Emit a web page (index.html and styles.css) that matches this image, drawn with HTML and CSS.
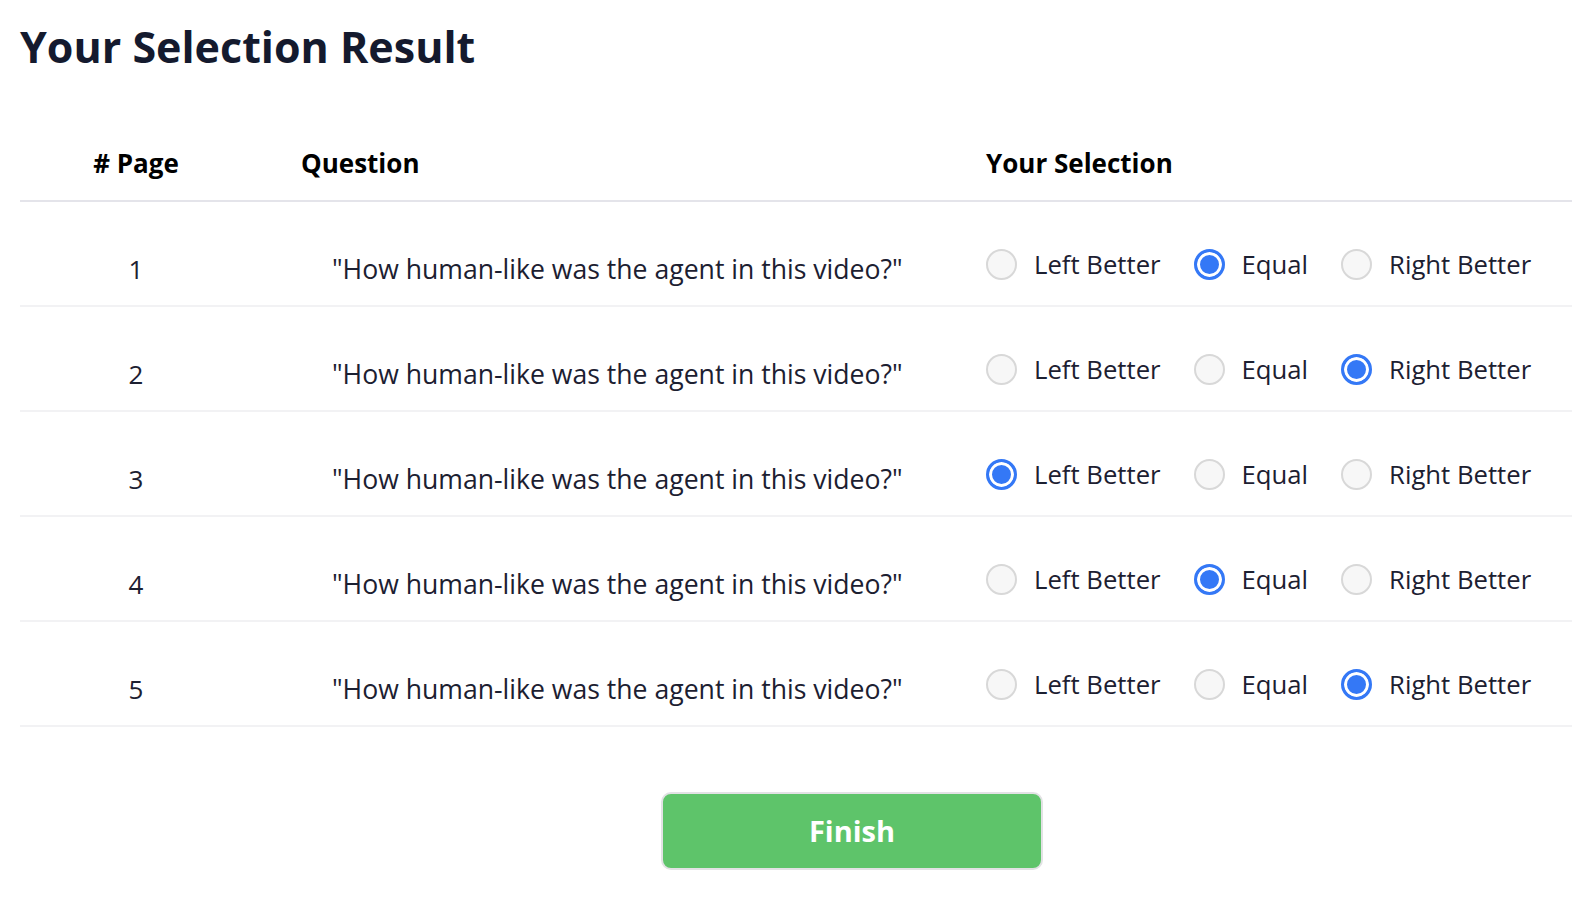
FILE: index.html
```html
<!DOCTYPE html>
<html lang="en">
<head>
<meta charset="utf-8">
<title>Your Selection Result</title>
<link rel="stylesheet" href="styles.css">
</head>
<body>
<div class="page">
  <h1 class="title">Your Selection Result</h1>
  <table class="results">
    <colgroup>
      <col class="col-page">
      <col class="col-question">
      <col class="col-selection">
    </colgroup>
    <thead>
      <tr>
        <th class="th-page"># Page</th>
        <th class="th-question">Question</th>
        <th class="th-selection">Your Selection</th>
      </tr>
    </thead>
    <tbody>
      <tr>
        <td class="td-page">1</td>
        <td class="td-question">"How human-like was the agent in this video?"</td>
        <td class="td-selection">
          <div class="options">
            <label class="option"><span class="radio"></span><span class="opt-text">Left Better</span></label>
            <label class="option"><span class="radio checked"></span><span class="opt-text">Equal</span></label>
            <label class="option"><span class="radio"></span><span class="opt-text">Right Better</span></label>
          </div>
        </td>
      </tr>
      <tr>
        <td class="td-page">2</td>
        <td class="td-question">"How human-like was the agent in this video?"</td>
        <td class="td-selection">
          <div class="options">
            <label class="option"><span class="radio"></span><span class="opt-text">Left Better</span></label>
            <label class="option"><span class="radio"></span><span class="opt-text">Equal</span></label>
            <label class="option"><span class="radio checked"></span><span class="opt-text">Right Better</span></label>
          </div>
        </td>
      </tr>
      <tr>
        <td class="td-page">3</td>
        <td class="td-question">"How human-like was the agent in this video?"</td>
        <td class="td-selection">
          <div class="options">
            <label class="option"><span class="radio checked"></span><span class="opt-text">Left Better</span></label>
            <label class="option"><span class="radio"></span><span class="opt-text">Equal</span></label>
            <label class="option"><span class="radio"></span><span class="opt-text">Right Better</span></label>
          </div>
        </td>
      </tr>
      <tr>
        <td class="td-page">4</td>
        <td class="td-question">"How human-like was the agent in this video?"</td>
        <td class="td-selection">
          <div class="options">
            <label class="option"><span class="radio"></span><span class="opt-text">Left Better</span></label>
            <label class="option"><span class="radio checked"></span><span class="opt-text">Equal</span></label>
            <label class="option"><span class="radio"></span><span class="opt-text">Right Better</span></label>
          </div>
        </td>
      </tr>
      <tr>
        <td class="td-page">5</td>
        <td class="td-question">"How human-like was the agent in this video?"</td>
        <td class="td-selection">
          <div class="options">
            <label class="option"><span class="radio"></span><span class="opt-text">Left Better</span></label>
            <label class="option"><span class="radio"></span><span class="opt-text">Equal</span></label>
            <label class="option"><span class="radio checked"></span><span class="opt-text">Right Better</span></label>
          </div>
        </td>
      </tr>
    </tbody>
  </table>
  <div class="actions">
    <button class="finish" type="button">Finish</button>
  </div>
</div>
</body>
</html>
```
FILE: styles.css
```css
html, body {
  margin: 0;
  padding: 0;
  background: #ffffff;
}

body {
  font-family: "Open Sans", "Noto Sans", sans-serif;
  color: #1c2031;
}

.page {
  padding-left: 20px;
}

.title {
  margin: 0;
  padding-top: 18px;
  font-size: 43px;
  font-weight: 700;
  line-height: 1.362;
  color: #141a2e;
}

.results {
  width: 100%;
  margin-top: 36px;
  border-collapse: collapse;
  table-layout: fixed;
}

.col-page { width: 232px; }
.col-question { width: 734px; }
.col-selection { width: auto; }

.results th {
  padding: 32px 0 19px;
  font-size: 26px;
  font-weight: 700;
  line-height: 36px;
  color: #000000;
  text-align: left;
  border-bottom: 2px solid #e4e4ea;
}

.results .th-page { text-align: center; }
.results .th-question { padding-left: 49px; }

.results td {
  padding: 49px 0 18px;
  font-size: 26px;
  line-height: 36px;
  color: #1c2031;
  border-bottom: 2px solid #f2f2f4;
  vertical-align: top;
  white-space: nowrap;
}

.results .td-page { text-align: center; }
.results .td-question { padding-left: 80px; font-size: 26.6px; }
.results .td-selection { padding-top: 45px; padding-bottom: 22px; }

.options {
  display: flex;
  align-items: center;
  gap: 33px;
}

.option {
  display: flex;
  align-items: center;
  gap: 17px;
  font-size: 25.7px;
  line-height: 36px;
  color: #1c2031;
}

.opt-text {
  position: relative;
  top: 0;
}

.radio {
  box-sizing: border-box;
  width: 31px;
  height: 31px;
  flex: none;
  border-radius: 50%;
  border: 2px solid #d8d8d8;
  background: #f7f7f7;
}

.radio.checked {
  border: 3px solid #3478f6;
  background: #3478f6;
  box-shadow: inset 0 0 0 3px #ffffff;
}

.actions {
  display: flex;
  margin-top: 65px;
  padding-left: 641px;
}

.finish {
  box-sizing: border-box;
  width: 382px;
  height: 78px;
  border: 2px solid #e2e2e4;
  border-radius: 10px;
  background: #5ec46a;
  color: #ffffff;
  font-family: "Open Sans", "Noto Sans", sans-serif;
  font-size: 29px;
  font-weight: 700;
  cursor: pointer;
}
```
